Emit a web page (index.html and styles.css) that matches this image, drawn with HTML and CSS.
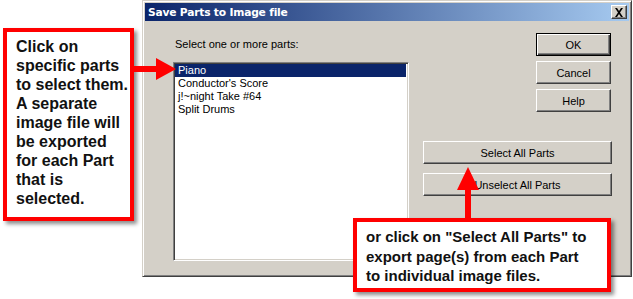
FILE: index.html
```html
<!DOCTYPE html>
<html lang="en">
<head>
    <meta charset="UTF-8">
    <title>Save Parts to Image file</title>
    <link rel="stylesheet" href="styles.css">
</head>
<body>
    <!-- dialog window -->
    <div class="dlg">
        <div class="ttl">
            <span class="ttlTxt">Save Parts to Image file</span>
            <span class="xbtn">
                <svg width="10" height="9" viewBox="0 0 10 9">
                    <path d="M1 0h2l2 3 2-3h2L6 4.5 9 9H7L5 6 3 9H1l3-4.5z" fill="#000"/>
                </svg>
            </span>
        </div>

        <div class="dlgBody">
            <div class="leftCol">
                <p class="lbl">Select one or more parts:</p>
                <ul class="list">
                    <li class="on">Piano</li>
                    <li>Conductor's Score</li>
                    <li>j!~night Take #64</li>
                    <li>Split Drums</li>
                </ul>
            </div>

            <div class="rightCol">
                <button class="btn small dflt">OK</button>
                <button class="btn small">Cancel</button>
                <button class="btn small">Help</button>
                <button class="btn wide first">Select All Parts</button>
                <button class="btn wide">Unselect All Parts</button>
            </div>
        </div>
    </div>

    <!-- callouts over the dialog -->
    <div class="note note1">
        Click on<br>specific parts<br>to select them.<br>A separate<br>image file will<br>be exported<br>for each Part<br>that is<br>selected.
    </div>

    <div class="note note2">
        or click on "Select All Parts" to<br>export page(s) from each Part<br>to individual image files.
    </div>

    <svg class="arrows" width="633" height="299" viewBox="0 0 633 299">
        <!-- left arrow : points at the list -->
        <rect x="132" y="66" width="26" height="6" fill="#f00"/>
        <polygon points="156,58 176,69 156,80" fill="#f00"/>
        <!-- up arrow : points at Select All Parts -->
        <rect x="465" y="188" width="6" height="31" fill="#f00"/>
        <polygon points="457,190 468,167 479,190" fill="#f00"/>
    </svg>
</body>
</html>
```

FILE: styles.css
```css
/* reset */
html, body{
    margin: 0;
    padding: 0;
}
body{
    position: relative;
    width: 633px;
    height: 299px;
    background: #fff;
    font-family: "Liberation Sans", Arial, sans-serif;
    overflow: hidden;
}

/* dialog - classic windows look */
.dlg{
    box-sizing: border-box;
    width: 490px;
    height: 277px;
    margin-left: 142px;
    padding: 2px;
    background: #d4d0c8;
    border: 1px solid;
    border-color: #d4d0c8 #404040 #404040 #d4d0c8;
    box-shadow: inset 1px 1px #fff, inset -1px -1px #808080;
}

.ttl{
    display: flex;
    align-items: center;
    justify-content: space-between;
    height: 18px;
    padding: 0 2px 0 3px;
    background: linear-gradient(to right, #0a246a, #a6caf0);
}
.ttlTxt{
    color: #fff;
    font-size: 10.7px;
    font-weight: bold;
    font-family: "DejaVu Sans", Verdana, sans-serif;
    letter-spacing: -0.2px;
}
.xbtn{
    display: flex;
    align-items: center;
    justify-content: center;
    width: 16px;
    height: 14px;
    box-sizing: border-box;
    background: #d4d0c8;
    border: 1px solid;
    border-color: #fff #404040 #404040 #fff;
    box-shadow: inset -1px -1px #808080;
}

/* body grid : list on the left, buttons on the right */
.dlgBody{
    display: grid;
    grid-template-columns: 236px 189px;
    column-gap: 14px;
    padding-left: 28px;
}

.lbl{
    margin: 17px 0 11px 2px;
    font-size: 11px;
    line-height: 13px;
    color: #000;
}

.list{
    box-sizing: border-box;
    height: 199px;
    margin: 0;
    padding: 0;
    list-style: none;
    background: #fff;
    border: 1px solid;
    border-color: #808080 #fff #fff #808080;
    box-shadow: inset 1px 1px #404040, inset -1px -1px #d4d0c8;
    padding: 1px 2px 0 1px;
}
.list li{
    padding-left: 3px;
    font-size: 11px;
    line-height: 13px;
    color: #000;
}
.list li.on{
    background: #0a246a;
    color: #fff;
}

.rightCol{
    display: flex;
    flex-direction: column;
    gap: 5px;
    padding-top: 12px;
}

.btn{
    box-sizing: border-box;
    height: 23px;
    padding: 0;
    font-family: "Liberation Sans", Arial, sans-serif;
    font-size: 11px;
    color: #000;
    background: #d4d0c8;
    border: 1px solid;
    border-color: #fff #404040 #404040 #fff;
    box-shadow: inset -1px -1px #808080;
}
.small{
    align-self: flex-end;
    width: 75px;
    margin-right: 1px;
}
.dflt{
    border: 1px solid #000;
    box-shadow: inset 1px 1px #fff, inset -1px -1px #404040, inset -2px -2px #808080;
}
.wide{
    width: 189px;
}
.first{
    margin-top: 24px;
    margin-bottom: 4px;
}

/* red callouts */
.note{
    position: absolute;
    box-sizing: border-box;
    background: #fff;
    border: 4px solid #f00;
    box-shadow: 3px 3px 4px rgba(0,0,0,.45);
    color: #111;
    font-weight: bold;
}
.note1{
    left: 3px;
    top: 28px;
    width: 131px;
    height: 193px;
    padding: 5px 0 0 9px;
    font-size: 16px;
    line-height: 19px;
}
.note2{
    left: 353px;
    top: 218px;
    width: 258px;
    height: 74px;
    padding: 5px 0 0 9px;
    font-size: 15px;
    line-height: 19.5px;
}

.arrows{
    position: absolute;
    left: 0;
    top: 0;
    pointer-events: none;
}
```
